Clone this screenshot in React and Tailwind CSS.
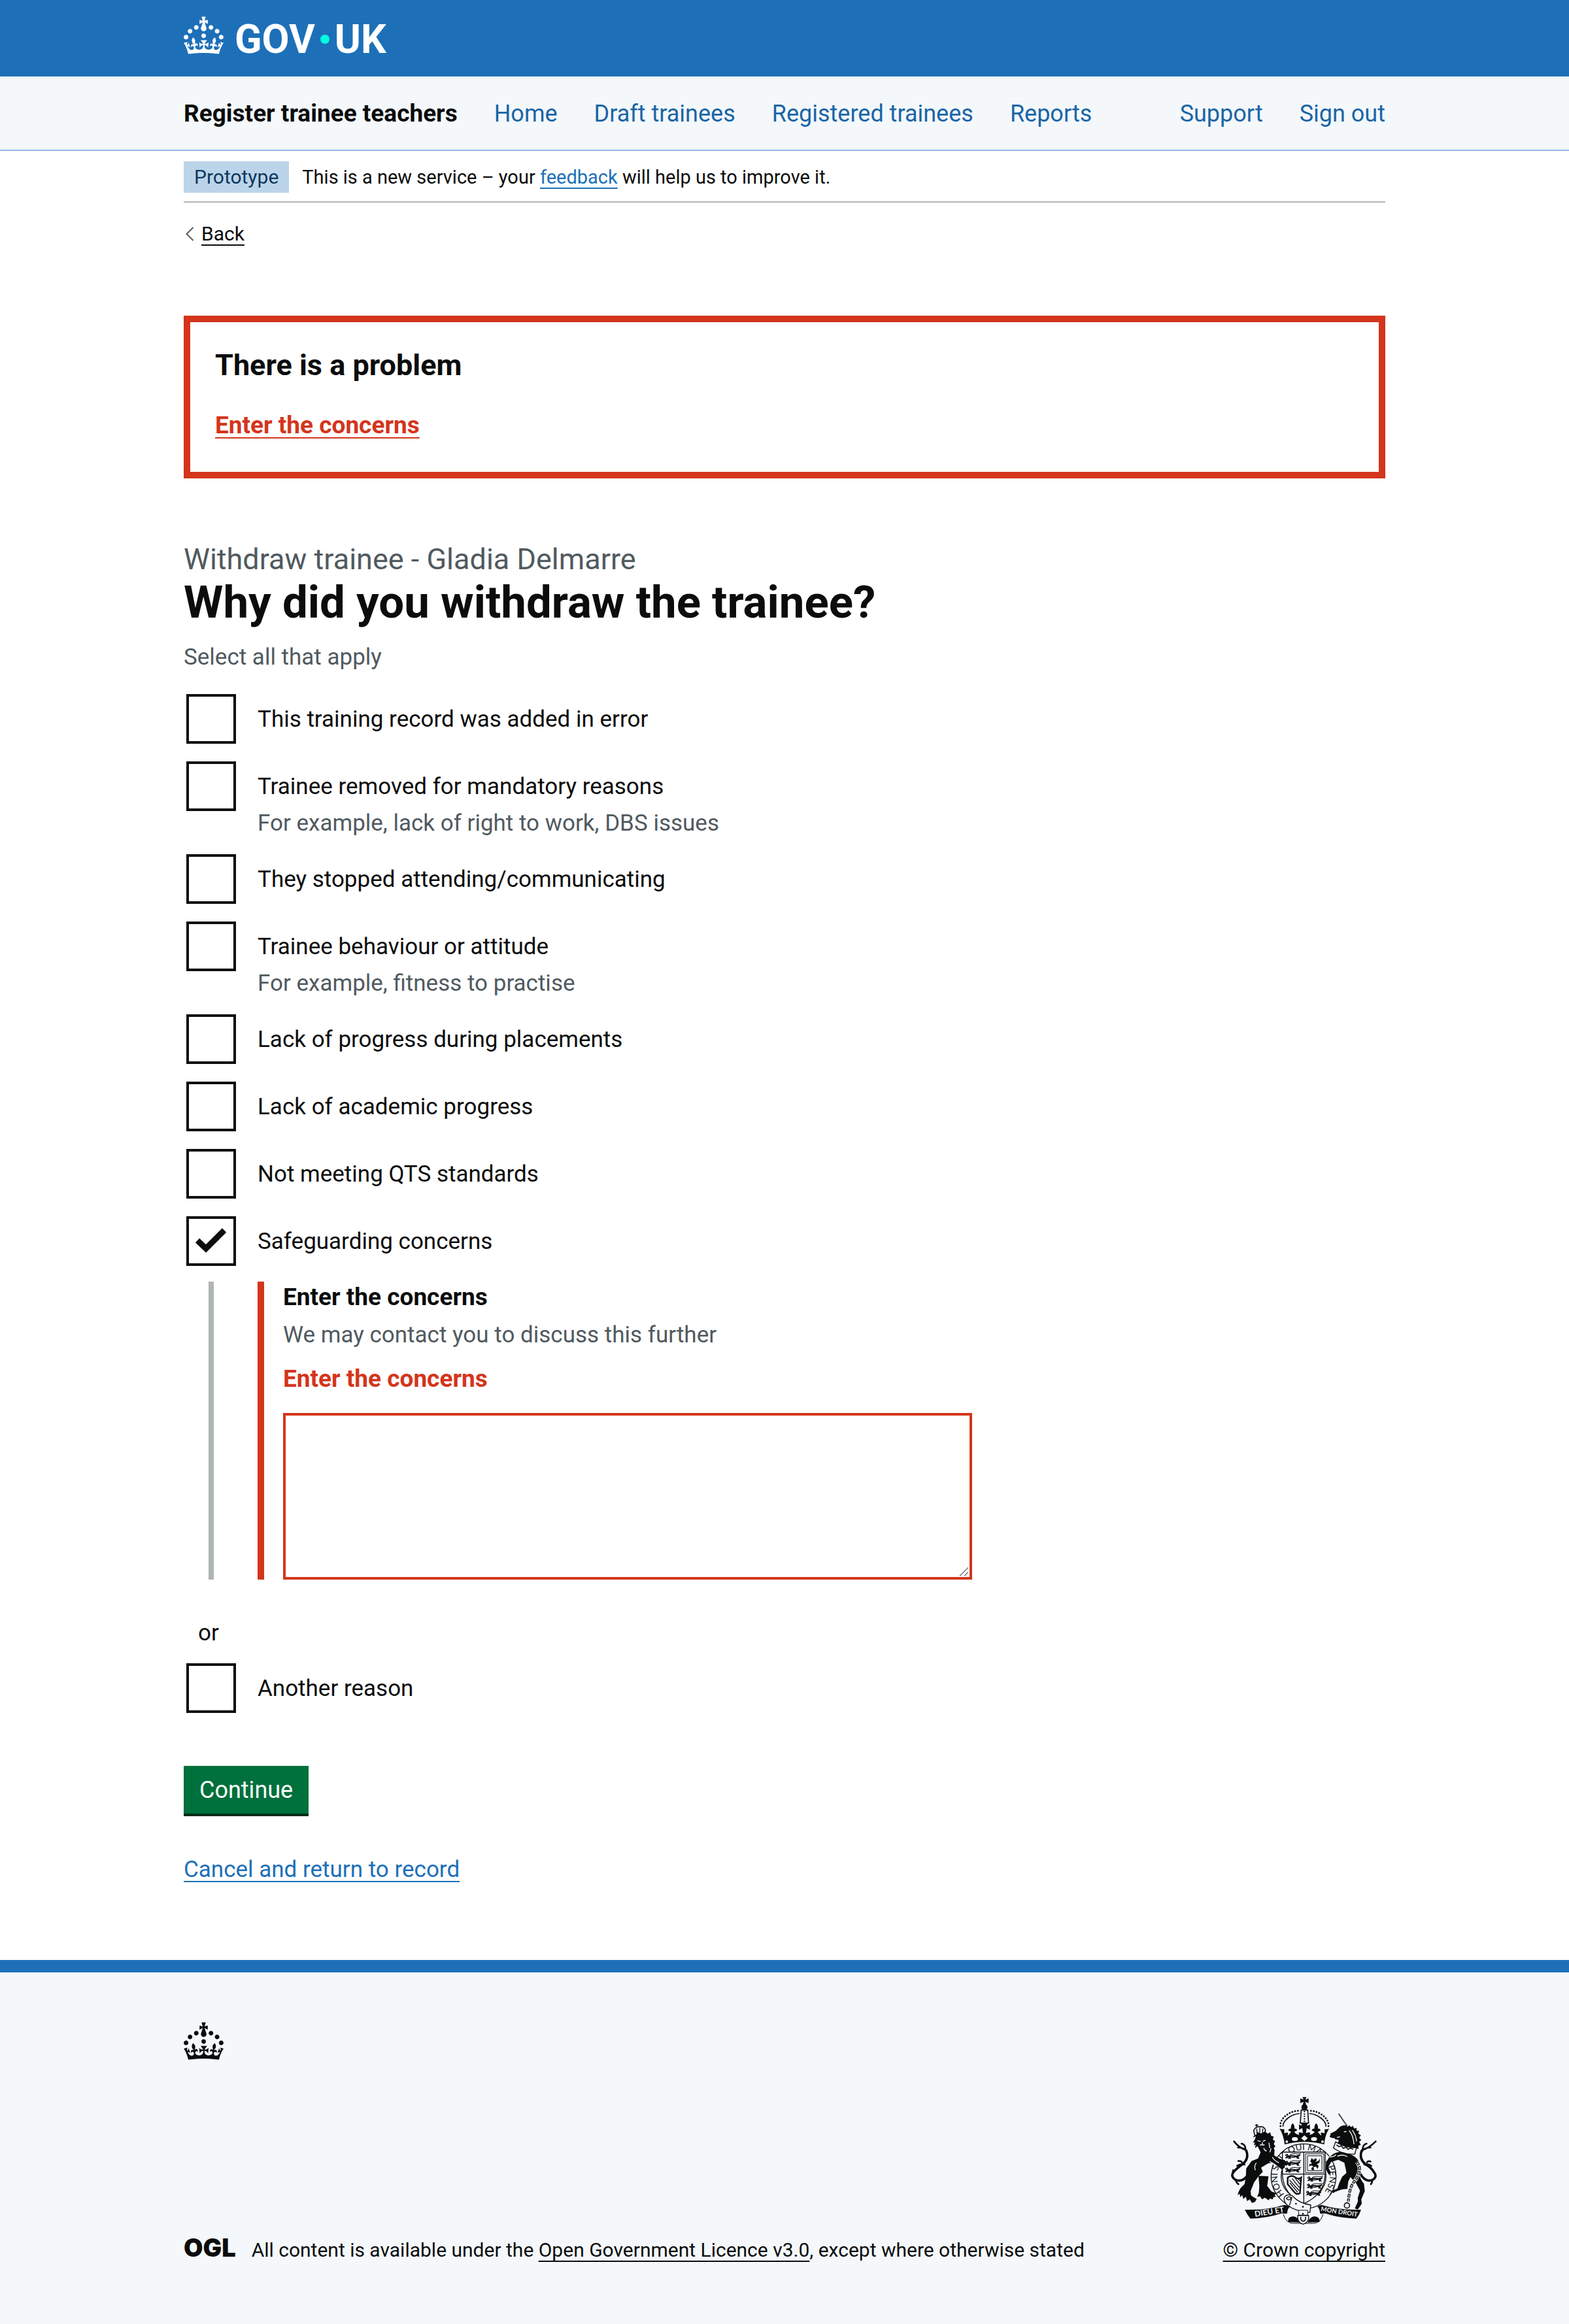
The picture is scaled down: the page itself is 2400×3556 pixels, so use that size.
import { useState } from "react";

const reasons = [
  { id: "error", label: "This training record was added in error" },
  {
    id: "mandatory",
    label: "Trainee removed for mandatory reasons",
    hint: "For example, lack of right to work, DBS issues",
  },
  { id: "stopped", label: "They stopped attending/communicating" },
  {
    id: "behaviour",
    label: "Trainee behaviour or attitude",
    hint: "For example, fitness to practise",
  },
  { id: "placements", label: "Lack of progress during placements" },
  { id: "academic", label: "Lack of academic progress" },
  { id: "qts", label: "Not meeting QTS standards" },
  { id: "safeguarding", label: "Safeguarding concerns" },
];

const link = "underline decoration-2 underline-offset-[6px]";

function Container({ children, className = "" }) {
  return <div className={`mx-auto w-full max-w-[1838px] ${className}`}>{children}</div>;
}

function Crown({ className = "" }) {
  return (
    <svg viewBox="0 0 32 30" className={`h-[58px] w-[61px] shrink-0 ${className}`} fill="currentColor" aria-hidden="true">
      <path
        fillRule="evenodd"
        d="M22.6 10.4c-1 .4-2-.1-2.4-1-.4-.9.1-2 1-2.4.9-.4 2 .1 2.4 1s-.1 2-1 2.4m-5.9 6.7c-.9.4-2-.1-2.4-1-.4-.9.1-2 1-2.4.9-.4 2 .1 2.4 1s-.1 2-1 2.4m10.8-3.7c-1 .4-2-.1-2.4-1-.4-.9.1-2 1-2.4.9-.4 2 .1 2.4 1s0 2-1 2.4m3.3 4.8c-1 .4-2-.1-2.4-1-.4-.9.1-2 1-2.4.9-.4 2 .1 2.4 1s-.1 2-1 2.4M17 4.7l2.3 1.2V2.5l-2.3.7-.2-.2.9-3h-3.4l.9 3-.2.2c-.1.1-2.3-.7-2.3-.7v3.4L15 4.7c.1.1.1.2.2.2l-1.3 4c-.1.2-.1.4-.1.6 0 1.1.8 2 1.9 2.2h.7c1-.2 1.9-1.1 1.9-2.1 0-.2 0-.4-.1-.6l-1.3-4c-.1-.2 0-.2.1-.3m-7.6 5.7c.9.4 2-.1 2.4-1 .4-.9-.1-2-1-2.4-.9-.4-2 .1-2.4 1s0 2 1 2.4m-5 3c.9.4 2-.1 2.4-1 .4-.9-.1-2-1-2.4-.9-.4-2 .1-2.4 1s.1 2 1 2.4m-3.2 4.8c.9.4 2-.1 2.4-1 .4-.9-.1-2-1-2.4-.9-.4-2 .1-2.4 1s0 2 1 2.4m14.8 11c4.4 0 8.6.3 12.3.8 1.1-4.5 2.4-7 3.7-8.8l-2.5-.9c.2 1.3.3 1.9 0 2.7-.4-.4-.8-1.1-1.1-2.3l-1.2 4c.7-.5 1.3-.8 2-.9-1.1 2.5-2.6 3.1-3.5 3-1.1-.2-1.7-1.2-1.5-2.1.3-1.2 1.5-1.5 2.1-.1 1.1-2.3-.8-3-2-2.3 1.9-1.9 2.1-3.5.6-5.6-2.1 1.6-2.1 3.2-1.2 5.5-1.2-1.4-3.2-.6-2.5 1.6.9-1.4 2.1-.5 1.9.8-.2 1.1-1.7 2.1-3.5 1.9-2.7-.2-2.9-2.1-2.9-3.6.7-.1 1.9.5 2.9 1.9l.4-4.3c-1.1 1.1-2.1 1.4-3.2 1.4.4-1.2 2.1-3 2.1-3h-5.4s1.7 1.9 2.1 3c-1.1 0-2.1-.2-3.2-1.4l.4 4.3c1-1.4 2.2-2 2.9-1.9-.1 1.5-.2 3.4-2.9 3.6-1.9.2-3.4-.8-3.5-1.9-.2-1.3 1-2.2 1.9-.8.7-2.3-1.2-3-2.5-1.6.9-2.2.9-3.9-1.2-5.5-1.5 2-1.3 3.7.6 5.6-1.2-.7-3.1 0-2 2.3.6-1.4 1.8-1.1 2.1.1.2.9-.3 1.9-1.5 2.1-.9.2-2.4-.5-3.5-3 .6 0 1.2.3 2 .9l-1.2-4c-.3 1.1-.7 1.9-1.1 2.3-.3-.8-.2-1.4 0-2.7l-2.9.9C1.3 23 2.6 25.5 3.7 30c3.7-.5 7.9-.8 12.3-.8"
      />
    </svg>
  );
}

function Passant({ x, y }) {
  return (
    <g transform={`translate(${x} ${y})`}>
      <path d="M4 6q6-8 13-3l2 6q14-5 30-1 16 2 22-5l4 3q-4 7-10 9l6 8h-12l-4-7q-12 4-26 2l2 6h-13l2-7-10 5-6-2 8-8q-8 0-8-6z" />
      <path d="M26 6q14-9 34-4l18-3" fill="none" stroke="currentColor" strokeWidth="3" />
      <path d="M8 7h6M30 13h14" stroke="#f4f8fb" strokeWidth="2" />
    </g>
  );
}

function RoyalArms() {
  const bg = "#f4f8fb";
  return (
    <svg viewBox="130 84 669 588" className="h-[196px] w-[223px]" fill="currentColor" aria-hidden="true">
      {/* Imperial crown */}
      <path d="M458 86h18l-5 12 15-6v22l-15-6 4 14h-16l4-14-15 6V92l15 6z" />
      <circle cx="467" cy="133" r="14" />
      <path d="M452 146h30l4 60h-38z" fill={bg} stroke="currentColor" strokeWidth="5" />
      <path d="M467 150v54" stroke="currentColor" strokeWidth="6" strokeDasharray="6 5" />
      <path d="M357 220C352 184 400 148 445 149M577 220c5-36-43-72-88-71" fill="none" stroke="currentColor" strokeWidth="8" strokeLinecap="round" strokeDasharray="1 12" />
      <path d="M368 222c0-28 38-58 77-60M566 222c0-28-38-58-77-60" fill="none" stroke="currentColor" strokeWidth="5" />
      <path d="M354 230q9 6 20 3l1 20q8-5 17-3l-2 14q9-9 16-18l-14-7q5-10 13-7-2-16 8-26 10 10 8 26 9-3 13 7l-14 7q9 12 23 14l-3-10q12-5 20 3l-3-24-15 7v-24l14 6-5-11h32l-5 11 14-6v24l-15-7-3 24q8-8 20-3l-3 10q14-2 23-14l-14-7q4-10 13-7-2-16 8-26 10 10 8 26 8-3 13 7l-14 7q7 9 16 18l-2-14q9-2 17 3l1-20q11 3 20-3-20 34-22 74-90-24-182 0-4-42-23-74z" />
      <g fill={bg}>
        <circle cx="386" cy="291" r="6" />
        <ellipse cx="423" cy="279" rx="14" ry="9" />
        <path d="M467 262l15 13-15 13-15-13z" />
        <ellipse cx="511" cy="279" rx="14" ry="9" />
        <circle cx="550" cy="291" r="6" />
      </g>

      {/* Garter with motto */}
      <circle cx="463" cy="450" r="149" fill={bg} stroke="currentColor" strokeWidth="4" />
      <circle cx="463" cy="450" r="103" fill="none" stroke="currentColor" strokeWidth="4" />
      <path id="garter" d="M376 532A120 120 0 1 1 550 532" fill="none" />
      <text fontSize="40" fontFamily="Lato, sans-serif">
        <textPath href="#garter" startOffset="0">HONI SOIT QUI MAL Y PENSE</textPath>
      </text>

      {/* Quartered shield */}
      <path d="M366 339h196v105q-4 90-99 132-93-42-97-132z" fill={bg} stroke="currentColor" strokeWidth="4" />
      <path d="M464 339v235M366 440h196" stroke="currentColor" strokeWidth="4" />
      <Passant x={374} y={346} />
      <Passant x={374} y={378} />
      <Passant x={374} y={409} />
      <Passant x={476} y={450} />
      <Passant x={474} y={483} />
      <Passant x={470} y={516} />
      <path d="M472 347h84v86h-84zM481 356h66v68h-66z" fill="none" stroke="currentColor" strokeWidth="3" />
      <path d="M500 366l8 8 12-8 4 10-8 8 14-4 8-12-2 20-12 6 8 8-4 14-8-10-12 2 4 12-10 2-4-8 10-10-12-4-8 6 2-12 12-2-8-10z" />
      <path d="M390 456q18-14 34-2t28 2l-6 72q-14 8-24-4l-32-38z" fill="none" stroke="currentColor" strokeWidth="7" />
      <path d="M398 466l44 50M400 480l36 44M410 460l34 42M424 458l22 28M434 458l14 14" stroke="currentColor" strokeWidth="4" />

      {/* Belt and buckle */}
      <path d="M374 549q10-22 38-9 30 34 84 42l-4 34q-66-4-104-34-16-14-14-33z" fill={bg} stroke="currentColor" strokeWidth="4" />
      <path d="M384 552q10-14 22-4-8 18-22 4zM410 546l-12 38" fill="none" stroke="currentColor" strokeWidth="4" />
      <circle cx="428" cy="576" r="4" />
      <circle cx="460" cy="590" r="4" />
      <path d="M370 624q12 44 50 42h86q36 0 46-42" fill="none" stroke="currentColor" strokeWidth="3" />
      <path d="M392 660q-4-24 24-26 22 4 30 28zM536 660q4-24-24-26-22 4-30 28z" />
      <path d="M440 606h42v22h-42z" fill={bg} stroke="currentColor" strokeWidth="3" />
      <path d="M436 630h50q4 32-25 40-28-8-25-40z" fill={bg} stroke="currentColor" strokeWidth="4" />
      <path d="M450 636q-2 20 11 20t11-20" fill="none" stroke="currentColor" strokeWidth="5" />
      <circle cx="460" cy="622" r="4" />

      {/* Motto scroll */}
      <path d="M193 604l36-1q75 0 146-22l28 7q-14 8-16 34l-26-2q-64 22-142 24-14-16-26-40z" />
      <path d="M727 604l-36-1q-75 0-146-22l-20 7q12 8 14 34l24-2q64 22 142 24 14-16 22-40z" />
      <g fill={bg} fontFamily="Lato, sans-serif" fontWeight="700">
        <text x="240" y="636" fontSize="36" transform="rotate(-9 240 636)">DIEU ET</text>
        <text x="541" y="609" fontSize="29" transform="rotate(9 541 609)">MON DROIT</text>
      </g>

      {/* Lion */}
      <g fill="none" stroke="currentColor" strokeLinecap="round">
        <path d="M210 440q-26 40-60 26-24-16-8-36 14-16 42-36 30-26 16-62" strokeWidth="11" />
        <path d="M200 334q-10-16-38-16M196 328q2-24-18-28M190 326q-26-10-46-36M192 396q-16-6-34 6M180 386q-4-8-16-6M152 466q2 14 12 20M136 440l4-18" strokeWidth="8" />
        <path d="M234 240q10-20 26-17 20-4 28 14l-4 22q-24-8-44 6z" strokeWidth="5" strokeDasharray="4 2" />
        <path d="M248 211v12M242 216h12M234 268q24-16 56-8M248 232l2 26M262 228v28M276 232l-2 24" strokeWidth="4" />
      </g>
      <path d="M240 280l-10 16 10-2-6 14 9-4-3 16 12-8 14 28-12 28-30 12-24 34-2 40-6 32-18 18-8 14-6 18 10-6 2 16 10-10 4 18 12-10 6 20 12-8 10 16 14-4 8-14-14-8-12-8-2-20 16-40 22-30 18-18-8-20 34-20 22-2 38 30 14-6 2-14 8 4 2-12-12-14-22-6-26-16 2-24-4-10 8-8-8-10 6-14-10-6 4-14-12-4-4-16-12 6-12-10-20 10-16-8z" />
      <path d="M256 448l46 2-6 44 20 26 22 8-8 8 6 8-12 2-2 10-14-4-6 8-16-12-14 8-8-14-14 2 8-20 2-30z" />
      <path d="M252 286l14 4M288 284l-12 6M262 306h22M274 294v10M280 320q4 12 14 14M246 388q-12 16-4 34M308 382l28 18M320 362q8 16 30 26M304 296l4 24M314 322l-6 18" fill="none" stroke={bg} strokeWidth="4" />

      {/* Unicorn */}
      <path d="M624 163l40 58" stroke="currentColor" strokeWidth="6" strokeDasharray="5 2" />
      <path d="M664 222l10-6 6 8 10-6 4 12 12-2 0 12 12 2-4 12 12 8-8 10 10 12-10 8 8 14-12 4 2 14-14-2-8 12-20-14-54-16 4-22q-18 2-20-8-16 2-22-8l6-8-4-4q26-8 40-26 14-14 32-12z" />
      <path d="M610 292q50 30 96 26l-8 30q-54 4-98-28z" fill={bg} stroke="currentColor" strokeWidth="4" />
      <path d="M614 306l12 8 10-4 10 12 12-6 8 10 14-6 10 6" fill="none" stroke="currentColor" strokeWidth="5" />
      <path d="M648 246l12-2M616 272l14-4M672 240q20 24 22 62M686 238q18 22 20 52" fill="none" stroke={bg} strokeWidth="4" />
      <path d="M592 352q36-22 66-8 48 8 62 46-4 20-2 44 4 30 22 50l4 34-16 38 2 20-18 26-14-4 14-32 0-18 10-32-18-34-26-28-10 20-4 34-24 2-34 12-6 6-8-12 26-10 8-24 14-30 20-18-10-46-28-14-32 10-14 24 12 24-8 12-16-26 2-30q12-26 28-36z" />
      <path d="M612 350q-10 14-38 10M664 360q-24-14-46-2" fill="none" stroke={bg} strokeWidth="4" />
      <g fill="none" stroke="currentColor" strokeLinecap="round">
        <path d="M724 440q24 40 56 26 24-14 4-38-10-18-38-34-30-26-16-62" strokeWidth="11" />
        <path d="M732 334q10-16 38-16M734 328q0-24 18-28M742 326q26-10 52-36M742 396q14-6 32 6M754 386q4-8 16-4M778 466q0 14-6 20" strokeWidth="8" />
      </g>
      <path d="M706 384q20 20 12 48-10 28-24 44-20 24-26 96" fill="none" stroke={bg} strokeWidth="17" />
      <path d="M706 384q20 20 12 48-10 28-24 44-20 24-26 90" fill="none" stroke="currentColor" strokeWidth="12" strokeDasharray="18 5" />
      <path d="M706 384q20 20 12 48-10 28-24 44-20 24-26 90" fill="none" stroke={bg} strokeWidth="4" strokeDasharray="12 11" strokeDashoffset="-3" />
      <circle cx="662" cy="584" r="12" fill="none" stroke="currentColor" strokeWidth="5" />
    </svg>
  );
}

function Checkbox({ id, label, hint, checked, onChange }) {
  return (
    <div className="flex items-start pl-1">
      <div className="relative size-[76px] shrink-0">
        <input
          type="checkbox"
          id={id}
          checked={checked}
          onChange={onChange}
          aria-describedby={hint ? `${id}-hint` : undefined}
          className="block size-[76px] appearance-none border-4 border-[#0b0c0c] bg-white"
        />
        {checked && (
          <svg viewBox="0 0 76 76" className="pointer-events-none absolute inset-0 size-[76px]" fill="none" aria-hidden="true">
            <path d="M17 37l13 12.500 28-28" stroke="#0b0c0c" strokeWidth="9" />
          </svg>
        )}
      </div>
      <div className="pt-[17px] pl-[33px]">
        <label htmlFor={id} className="block">{label}</label>
        {hint && (
          <p id={`${id}-hint`} className="mt-3 -mb-0.5 text-[#505a5f]">{hint}</p>
        )}
      </div>
    </div>
  );
}

export default function App() {
  const [checked, setChecked] = useState({ safeguarding: true });
  const toggle = (id) => () => setChecked((c) => ({ ...c, [id]: !c[id] }));

  return (
    <div className="bg-white font-[Roboto,sans-serif] text-[35px] leading-[44px] text-[#0b0c0c]">
      <header>
        <div className="bg-[#1d70b8] text-white">
          <Container>
            <a href="#home" aria-label="GOV.UK" className="flex h-[117px] w-fit items-center">
              <Crown className="mb-[10px]" />
              <span className="ml-[17px] flex items-center gap-2 pt-0.5 text-[61px] leading-[60px] font-bold">
                GOV
                <span className="size-[14px] rounded-full bg-[#00ffe0]" />
                UK
              </span>
            </a>
          </Container>
        </div>
        <div className="border-b-2 border-[#8eb8dc] bg-[#f4f8fb]">
          <Container className="flex h-[112px] items-center justify-between pt-0.5 text-[36px]">
            <nav aria-label="Service" className="flex items-center gap-14 text-[#1a65a6]">
              <a href="#service" className="text-[37px] font-bold text-[#0b0c0c]">Register trainee teachers</a>
              <a href="#home">Home</a>
              <a href="#drafts">Draft trainees</a>
              <a href="#registered">Registered trainees</a>
              <a href="#reports">Reports</a>
            </nav>
            <nav aria-label="Account" className="flex items-center gap-14 text-[#1a65a6]">
              <a href="#support">Support</a>
              <a href="#sign-out">Sign out</a>
            </nav>
          </Container>
        </div>
      </header>

      <Container>
        <div className="flex items-center border-b-2 border-[#b1b4b6] pt-4 pb-[13px] text-[30px]">
          <strong className="flex h-12 items-center bg-[#bbd4ea] px-4 font-normal text-[#0f385c]">Prototype</strong>
          <p className="ml-5 text-[29px] leading-10">
            This is a new service – your <a href="#feedback" className={`${link} text-[#1d70b8]`}>feedback</a> will help us to improve it.
          </p>
        </div>

        <a href="#back" className="mt-7 flex w-fit items-center text-[30px] leading-10">
          <svg viewBox="0 0 24 24" className="mr-[3px] h-6 w-6" fill="none" stroke="#505a5f" strokeWidth="2" aria-hidden="true">
            <path d="M14.500 2L4.500 12l10 10" />
          </svg>
          <span className={link}>Back</span>
        </a>

        <main className="flex flex-col items-start">
          <section aria-labelledby="problem" className="mt-[105px] w-full border-[10px] border-[#d4351c] px-[38px] pt-[38px] pb-12">
            <h2 id="problem" className="text-[45px] leading-[56px] font-bold">There is a problem</h2>
            <p className="mt-[42px]">
              <a href="#concerns" className={`${link} text-[37px] font-bold text-[#d4351c]`}>Enter the concerns</a>
            </p>
          </section>

          <h1 className="mt-24 text-[69px] leading-[76px] font-bold">
            <span className="block text-[45px] leading-[56px] font-normal text-[#505a5f]">Withdraw trainee - Gladia Delmarre</span>
            Why did you withdraw the trainee?
          </h1>
          <p className="mt-6 text-[#505a5f]">Select all that apply</p>

          <div className="mt-[34px] flex flex-col gap-[27px]">
            {reasons.map((r) => (
              <Checkbox key={r.id} {...r} checked={!!checked[r.id]} onChange={toggle(r.id)} />
            ))}
          </div>

          <div className="mt-6 ml-[38px] w-full max-w-[1168px] border-l-8 border-[#b1b4b6] pl-[67px]">
            <div className="border-l-[10px] border-[#d4351c] pt-0.5 pl-[29px]">
              <label htmlFor="concerns" className="block text-[37px] font-bold">Enter the concerns</label>
              <p id="concerns-hint" className="mt-[14px] text-[#505a5f]">We may contact you to discuss this further</p>
              <p id="concerns-error" className="mt-[23px] text-[37px] font-bold text-[#d4351c]">Enter the concerns</p>
              <div className="relative mt-[30px]">
                <textarea
                  id="concerns"
                  aria-describedby="concerns-hint concerns-error"
                  className="block h-[255px] w-full resize-none border-4 border-[#d4351c] bg-white p-2"
                />
                <svg viewBox="0 0 14 14" className="pointer-events-none absolute right-[5px] bottom-[5px] size-[14px]" stroke="#7a7a7a" strokeWidth="1.500" aria-hidden="true">
                  <path d="M0 13.500L13 .500M7 13.500l6-6" />
                </svg>
              </div>
            </div>
          </div>

          <p className="mt-[60px] mb-6 ml-[22px]">or</p>
          <Checkbox id="another" label="Another reason" checked={!!checked.another} onChange={toggle("another")} />

          <button type="button" className="mt-[81px] h-[73px] bg-[#00703c] px-6 text-[36px] text-white shadow-[0_4px_0_#002d18]">Continue</button>
          <a href="#record" className={`${link} mt-16 text-[#1d70b8]`}>Cancel and return to record</a>
        </main>
      </Container>

      <footer className="mt-[116px] border-t-[19px] border-[#1d70b8] bg-[#f4f8fb] pt-[76px] pb-[93px] text-[30px] leading-10">
        <Container>
          <Crown />
          <div className="mt-14 flex items-end justify-between">
            <div className="flex items-end">
              <span className="mb-1 font-[Inter,sans-serif] text-[38px] font-black">OGL</span>
              <p className="ml-6">
                All content is available under the <a href="#licence" className={link}>Open Government Licence v3.0</a>, except where otherwise stated
              </p>
            </div>
            <a href="#copyright" className={`${link} flex flex-col items-center gap-[19px]`}>
              <RoyalArms />
              <span>© Crown copyright</span>
            </a>
          </div>
        </Container>
      </footer>
    </div>
  );
}
